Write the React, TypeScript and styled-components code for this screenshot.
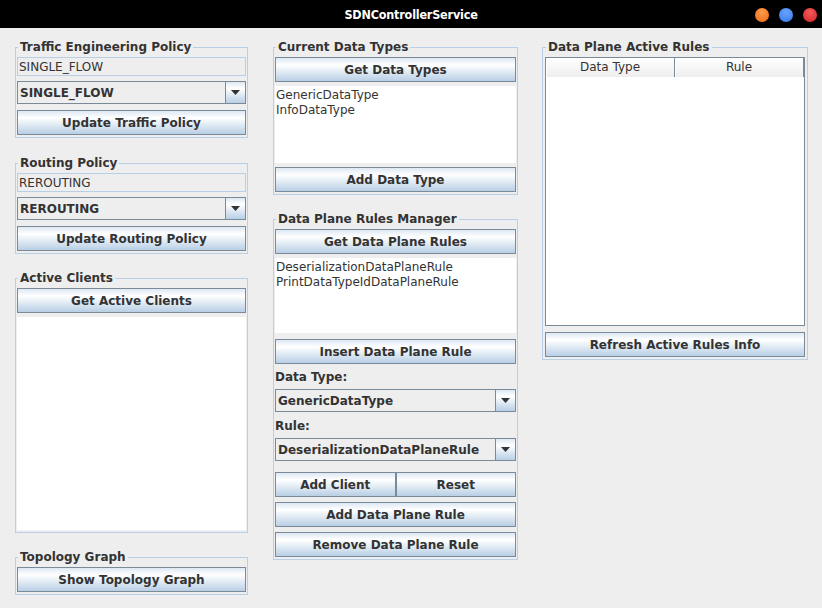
import React from "react";
import styled, { createGlobalStyle } from "styled-components";

const Global = createGlobalStyle`
  html, body { margin: 0; padding: 0; background: #eeeeee; }
  body { font-family: "DejaVu Sans", sans-serif; color: #333333; }
  * { box-sizing: border-box; }
`;

const Window = styled.div`
  width: 822px;
  height: 608px;
  display: flex;
  flex-direction: column;
  background: #eeeeee;
  overflow: hidden;
`;

const TitleBar = styled.div`
  height: 28px;
  flex: none;
  background: #000000;
  display: grid;
  grid-template-columns: 1fr auto 1fr;
  align-items: center;
`;

const Title = styled.div`
  grid-column: 2;
  color: #ffffff;
  font-family: "DejaVu Sans Condensed", "Noto Sans", sans-serif;
  font-weight: 700;
  font-size: 12.5px;
  letter-spacing: -0.2px;
`;

const Controls = styled.div`
  grid-column: 3;
  justify-self: end;
  display: flex;
  gap: 10px;
  padding-right: 5px;
  margin-top: 2px;
`;

const Dot = styled.span<{ $c: string; $hi: string }>`
  width: 14px;
  height: 14px;
  border-radius: 50%;
  background: radial-gradient(circle at 50% 30%, ${(p) => p.$hi}, ${(p) => p.$c} 70%);
`;

const Content = styled.div`
  display: flex;
  align-items: flex-start;
  padding: 11px 0 0 15px;
`;

const Column = styled.div<{ $w: number; $mr: number }>`
  width: ${(p) => p.$w}px;
  margin-right: ${(p) => p.$mr}px;
  display: flex;
  flex-direction: column;
  flex: none;
`;

const Group = styled.fieldset<{ $px?: number; $mt?: number }>`
  margin: ${(p) => p.$mt ?? 0}px 0 0 0;
  min-width: 0;
  border: 1px solid #b8cfe5;
  padding: 2px ${(p) => p.$px ?? 1}px 2px;
  display: flex;
  flex-direction: column;
  & > * { flex: none; }
`;

const Legend = styled.legend`
  padding: 0 2px;
  margin-left: 1px;
  font-weight: 700;
  font-size: 12px;
  line-height: 16px;
  color: #333333;
`;

const ReadOnlyField = styled.div<{ $mt?: number }>`
  margin-top: ${(p) => p.$mt ?? 0}px;
  height: 19px;
  border: 1px solid #b8cfe5;
  background: #eeeeee;
  font-size: 12px;
  line-height: 18px;
  padding: 0 1px;
  color: #333333;
`;

const Combo = styled.div<{ $mt?: number }>`
  margin-top: ${(p) => p.$mt ?? 0}px;
  height: 23px;
  display: flex;
  border: 1px solid #7a8a99;
  background: #eeeeee;
`;

const ComboValue = styled.div`
  flex: 1;
  display: flex;
  align-items: center;
  padding-left: 2px;
  font-weight: 700;
  font-size: 12px;
  color: #333333;
`;

const ComboArrow = styled.div`
  width: 20px;
  border-left: 1px solid #7a8a99;
  background: linear-gradient(to bottom, #dde8f3 0%, #ffffff 30%, #b8cfe5 100%);
  display: flex;
  align-items: center;
  justify-content: center;
`;

const Button = styled.button<{ $mt?: number }>`
  margin: ${(p) => p.$mt ?? 0}px 0 0 0;
  height: 25px;
  width: 100%;
  padding: 0;
  border: 1px solid #7a8a99;
  background: linear-gradient(to bottom, #dde8f3 0%, #ffffff 30%, #b8cfe5 100%);
  font-family: "DejaVu Sans", sans-serif;
  font-weight: 700;
  font-size: 12px;
  color: #333333;
`;

const ButtonRow = styled.div<{ $mt?: number }>`
  margin-top: ${(p) => p.$mt ?? 0}px;
  display: flex;
  & > ${Button} { flex: 1 1 0; min-width: 0; }
`;

const List = styled.div<{ $h: number; $mt?: number }>`
  margin-top: ${(p) => p.$mt ?? 0}px;
  height: ${(p) => p.$h}px;
  background: #ffffff;
  padding: 2px 1px;
  font-size: 12px;
  line-height: 15px;
  color: #333333;
`;

const FieldLabel = styled.div<{ $mt?: number }>`
  margin-top: ${(p) => p.$mt ?? 0}px;
  height: 16px;
  line-height: 16px;
  font-weight: 700;
  font-size: 12px;
  color: #333333;
`;

const Table = styled.div<{ $h: number }>`
  height: ${(p) => p.$h}px;
  border: 1px solid #7a8a99;
  background: #ffffff;
  display: flex;
  flex-direction: column;
`;

const TableHeader = styled.div`
  display: grid;
  grid-template-columns: 129px 1fr;
  height: 19px;
  border-bottom: 1px solid #7a8a99;
`;

const HeaderCell = styled.div`
  background: linear-gradient(to bottom, #ffffff 0%, #eeeeee 100%);
  border-right: 1px solid #7a8a99;
  box-shadow: inset 1px 0 0 #ffffff;
  font-size: 12px;
  line-height: 19px;
  text-align: center;
  color: #333333;
`;

const Arrow = () => (
  <svg width="9" height="5" viewBox="0 0 9 5">
    <path d="M0 0 H9 L4.5 5 Z" fill="#333333" />
  </svg>
);

const ComboBox = ({ value, mt }: { value: string; mt?: number }) => (
  <Combo $mt={mt}>
    <ComboValue>{value}</ComboValue>
    <ComboArrow>
      <Arrow />
    </ComboArrow>
  </Combo>
);

export default function App() {
  return (
    <Window>
      <Global />
      <TitleBar>
        <Title>SDNControllerService</Title>
        <Controls>
          <Dot $c="#f07a28" $hi="#ff9a4a" />
          <Dot $c="#4485ee" $hi="#6aa3ff" />
          <Dot $c="#dd3535" $hi="#f25a5a" />
        </Controls>
      </TitleBar>
      <Content>
        <Column $w={233} $mr={25}>
          <Group>
            <Legend>Traffic Engineering Policy</Legend>
            <ReadOnlyField>SINGLE_FLOW</ReadOnlyField>
            <ComboBox value="SINGLE_FLOW" mt={5} />
            <Button $mt={6}>Update Traffic Policy</Button>
          </Group>
          <Group $mt={17}>
            <Legend>Routing Policy</Legend>
            <ReadOnlyField>REROUTING</ReadOnlyField>
            <ComboBox value="REROUTING" mt={5} />
            <Button $mt={6}>Update Routing Policy</Button>
          </Group>
          <Group $mt={16}>
            <Legend>Active Clients</Legend>
            <Button>Get Active Clients</Button>
            <List $h={213} $mt={4} />
          </Group>
          <Group $mt={16}>
            <Legend>Topology Graph</Legend>
            <Button>Show Topology Graph</Button>
          </Group>
        </Column>
        <Column $w={245} $mr={24}>
          <Group>
            <Legend>Current Data Types</Legend>
            <Button>Get Data Types</Button>
            <List $h={77} $mt={4}>
              <div>GenericDataType</div>
              <div>InfoDataType</div>
            </List>
            <Button $mt={4}>Add Data Type</Button>
          </Group>
          <Group $mt={16}>
            <Legend>Data Plane Rules Manager</Legend>
            <Button>Get Data Plane Rules</Button>
            <List $h={75} $mt={4}>
              <div>DeserializationDataPlaneRule</div>
              <div>PrintDataTypeIdDataPlaneRule</div>
            </List>
            <Button $mt={6}>Insert Data Plane Rule</Button>
            <FieldLabel $mt={5}>Data Type:</FieldLabel>
            <ComboBox value="GenericDataType" mt={4} />
            <FieldLabel $mt={6}>Rule:</FieldLabel>
            <ComboBox value="DeserializationDataPlaneRule" mt={4} />
            <ButtonRow $mt={11}>
              <Button>Add Client</Button>
              <Button>Reset</Button>
            </ButtonRow>
            <Button $mt={5}>Add Data Plane Rule</Button>
            <Button $mt={5}>Remove Data Plane Rule</Button>
          </Group>
        </Column>
        <Column $w={266} $mr={0}>
          <Group $px={2}>
            <Legend>Data Plane Active Rules</Legend>
            <Table $h={269}>
              <TableHeader>
                <HeaderCell>Data Type</HeaderCell>
                <HeaderCell>Rule</HeaderCell>
              </TableHeader>
            </Table>
            <Button $mt={6}>Refresh Active Rules Info</Button>
          </Group>
        </Column>
      </Content>
    </Window>
  );
}
